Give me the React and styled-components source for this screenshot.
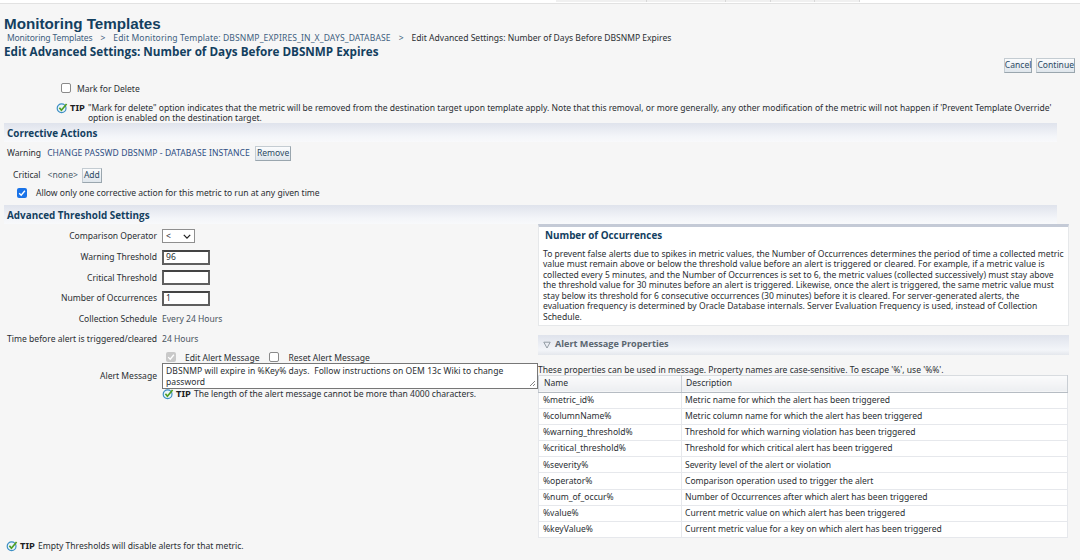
import React from "react";
import styled, { createGlobalStyle } from "styled-components";

const GlobalStyle = createGlobalStyle`
  html, body {
    margin: 0;
    padding: 0;
    background: #f6f6f6;
  }
  body {
    width: 1080px;
    height: 560px;
    overflow: hidden;
    font-family: "Noto Sans", "Liberation Sans", sans-serif;
    font-size: 8.55px;
    line-height: 10.5px;
    color: #2b2f33;
  }
`;

const tabs = [90, 78, 44, 43, 44];

const formRows = [
  { label: "Warning Threshold", value: "96" },
  { label: "Critical Threshold", value: "" },
  { label: "Number of Occurrences", value: "1" },
];

const properties = [
  ["%metric_id%", "Metric name for which the alert has been triggered"],
  ["%columnName%", "Metric column name for which the alert has been triggered"],
  ["%warning_threshold%", "Threshold for which warning violation has been triggered"],
  ["%critical_threshold%", "Threshold for which critical alert has been triggered"],
  ["%severity%", "Severity level of the alert or violation"],
  ["%operator%", "Comparison operation used to trigger the alert"],
  ["%num_of_occur%", "Number of Occurrences after which alert has been triggered"],
  ["%value%", "Current metric value on which alert has been triggered"],
  ["%keyValue%", "Current metric value for a key on which alert has been triggered"],
];

const TipIcon = () => (
  <TipSvg viewBox="0 0 12 12">
    <circle cx="5.6" cy="6.2" r="4.4" fill="#eaf5fb" stroke="#3d8fc4" strokeWidth="1.2" />
    <path d="M3.4 5.8 L5.4 8.2 L10.6 2" fill="none" stroke="#4f9e22" strokeWidth="1.7" />
  </TipSvg>
);

export default function App() {
  return (
    <>
      <GlobalStyle />
      <TopStrip>
        {tabs.map((w, i) => (
          <TopTab key={i} $w={w} />
        ))}
      </TopStrip>
      <Page>
        <Title>Monitoring Templates</Title>
        <Crumbs>
          <Crumb $tracking={-0.15}>Monitoring Templates</Crumb>
          <Sep>&gt;</Sep>
          <Crumb $tracking={0.13}>Edit Monitoring Template: DBSNMP_EXPIRES_IN_X_DAYS_DATABASE</Crumb>
          <Sep>&gt;</Sep>
          <span>Edit Advanced Settings: Number of Days Before DBSNMP Expires</span>
        </Crumbs>
        <SubTitle>Edit Advanced Settings: Number of Days Before DBSNMP Expires</SubTitle>
        <Actions>
          <Button>Cancel</Button>
          <Button>Continue</Button>
        </Actions>

        <DeleteRow>
          <Box />
          <span>Mark for Delete</span>
        </DeleteRow>
        <TopTip>
          <TipIcon />
          <TipLabel>TIP</TipLabel>
          <TipText>
            "Mark for delete" option indicates that the metric will be removed from the destination target upon
            template apply. Note that this removal, or more generally, any other modification of the metric will not
            happen if 'Prevent Template Override' option is enabled on the destination target.
          </TipText>
        </TopTip>

        <Band>Corrective Actions</Band>
        <WarningRow>
          <span>Warning</span>
          <ActionName>CHANGE PASSWD DBSNMP - DATABASE INSTANCE</ActionName>
          <Button>Remove</Button>
        </WarningRow>
        <CriticalRow>
          <span>Critical</span>
          <NoneText>&lt;none&gt;</NoneText>
          <Button>Add</Button>
        </CriticalRow>
        <AllowRow>
          <BlueCheck>
            <svg viewBox="0 0 10 10" width="8" height="8">
              <path d="M1.5 5.2 L4 7.8 L8.6 2.2" fill="none" stroke="#fff" strokeWidth="1.7" />
            </svg>
          </BlueCheck>
          <span>Allow only one corrective action for this metric to run at any given time</span>
        </AllowRow>

        <Band $flush>Advanced Threshold Settings</Band>
        <Columns>
          <LeftColumn>
            <FormRow $h={22}>
              <Label>Comparison Operator</Label>
              <SelectBox>
                <span>&lt;</span>
                <svg viewBox="0 0 10 6" width="8" height="5">
                  <path d="M1 1 L5 5 L9 1" fill="none" stroke="#222" strokeWidth="1.6" />
                </svg>
              </SelectBox>
            </FormRow>
            {formRows.map((r) => (
              <FormRow key={r.label} $h={20.5}>
                <Label>{r.label}</Label>
                <ValueInput>{r.value}</ValueInput>
              </FormRow>
            ))}
            <FormRow $h={21}>
              <Label>Collection Schedule</Label>
              <Value>Every 24 Hours</Value>
            </FormRow>
            <FormRow $h={20}>
              <Label>Time before alert is triggered/cleared</Label>
              <Value>24 Hours</Value>
            </FormRow>
            <EditRow>
              <GreyCheck>
                <svg viewBox="0 0 10 10" width="8" height="8">
                  <path d="M1.5 5.2 L4 7.8 L8.6 2.2" fill="none" stroke="#fff" strokeWidth="1.6" />
                </svg>
              </GreyCheck>
              <EditText>Edit Alert Message</EditText>
              <Box />
              <EditText>Reset Alert Message</EditText>
            </EditRow>
            <MessageRow>
              <MessageLabel>Alert Message</MessageLabel>
              <MessageBox>
                DBSNMP will expire in %Key% days.&nbsp; Follow instructions on OEM 13c Wiki to change password
                <Grip viewBox="0 0 7 7">
                  <path d="M1 6 L6 1 M4 6 L6 4" stroke="#666" strokeWidth="0.8" />
                </Grip>
              </MessageBox>
            </MessageRow>
            <MessageTip>
              <TipIcon />
              <TipLabel>TIP</TipLabel>
              <span>The length of the alert message cannot be more than 4000 characters.</span>
            </MessageTip>
          </LeftColumn>

          <RightColumn>
            <HelpCard>
              <HelpTitle>Number of Occurrences</HelpTitle>
              <HelpBody>
                To prevent false alerts due to spikes in metric values, the Number of Occurrences determines the period
                of time a collected metric value must remain above or below the threshold value before an alert is
                triggered or cleared. For example, if a metric value is collected every 5 minutes, and the Number of
                Occurrences is set to 6, the metric values (collected successively) must stay above the threshold value
                for 30 minutes before an alert is triggered. Likewise, once the alert is triggered, the same metric
                value must stay below its threshold for 6 consecutive occurrences (30 minutes) before it is cleared.
                For server-generated alerts, the
                <br />
                evaluation frequency is determined by Oracle Database internals. Server Evaluation Frequency is used,
                instead of Collection Schedule.
              </HelpBody>
            </HelpCard>
            <PropsBand>
              <svg viewBox="0 0 8 8" width="8" height="8">
                <path d="M0.8 1.2 H7.2 L4 7 Z" fill="none" stroke="#8a949c" strokeWidth="0.9" />
              </svg>
              <span>Alert Message Properties</span>
            </PropsBand>
            <PropsIntro>
              These properties can be used in message. Property names are case-sensitive. To escape '%', use '%%'.
            </PropsIntro>
            <PropsTable>
              <thead>
                <tr>
                  <HeadCell $first>Name</HeadCell>
                  <HeadCell>Description</HeadCell>
                </tr>
              </thead>
              <tbody>
                {properties.map(([name, desc]) => (
                  <tr key={name}>
                    <Cell $first>{name}</Cell>
                    <Cell>{desc}</Cell>
                  </tr>
                ))}
              </tbody>
            </PropsTable>
          </RightColumn>
        </Columns>

        <BottomTip>
          <TipIcon />
          <TipLabel>TIP</TipLabel>
          <span>Empty Thresholds will disable alerts for that metric.</span>
        </BottomTip>
      </Page>
    </>
  );
}

const TopStrip = styled.div`
  display: flex;
  height: 3px;
  padding-left: 556px;
  background: #fff;
  border-bottom: 1px solid #e2e2e2;
`;

const TopTab = styled.div`
  width: ${(p) => p.$w}px;
  height: 2px;
  background: #f0f0f0;
  border-right: 1px solid #d8d8d8;
`;

const Page = styled.div`
  padding: 0 4px;
`;

const Title = styled.h1`
  margin: 0;
  padding-top: 12px;
  font-family: "Liberation Sans", "Noto Sans", sans-serif;
  font-size: 15.2px;
  line-height: 16px;
  font-weight: 700;
  color: #13405f;
`;

const Crumbs = styled.div`
  display: flex;
  padding: 1px 0 0 3px;
  color: #2b2f33;
  white-space: nowrap;
`;

const Crumb = styled.span`
  letter-spacing: ${(p) => p.$tracking}px;
  color: #3f5f80;
`;

const Sep = styled.span`
  margin: 0 8px;
  color: #3f5f80;
`;

const SubTitle = styled.h2`
  margin: 0;
  font-family: "Open Sans", "Noto Sans", sans-serif;
  font-size: 11.7px;
  line-height: 14px;
  font-weight: 700;
  color: #13405f;
`;

const Actions = styled.div`
  display: flex;
  justify-content: flex-end;
  gap: 4px;
  height: 14px;
  padding-right: 1px;
`;

const Button = styled.button`
  height: 15px;
  padding: 0;
  border: 1px solid #c4ccd2;
  border-bottom-color: #9aa6ae;
  border-right-color: #9aa6ae;
  background: linear-gradient(#fbfcfd, #dfe6ec);
  color: #2c4a63;
  font: inherit;
`;

const DeleteRow = styled.div`
  display: flex;
  align-items: center;
  gap: 6px;
  height: 14px;
  margin-top: 11px;
  padding-left: 57px;
`;

const Box = styled.span`
  width: 8px;
  height: 8px;
  flex: none;
  margin-bottom: 3px;
  border: 1px solid #8a8a8a;
  border-radius: 2px;
  background: #fff;
`;

const TopTip = styled.div`
  display: flex;
  align-items: flex-start;
  height: 20px;
  margin-top: 6px;
  padding-left: 52px;
`;

const TipSvg = styled.svg`
  width: 12px;
  height: 12px;
  flex: none;
  margin-top: -1px;
`;

const TipLabel = styled.b`
  margin: 0 3px 0 2px;
  font-size: 9.4px;
  color: #1c2024;
`;

const TipText = styled.div`
  flex: 1;
  padding-right: 22px;
`;

const Band = styled.div`
  width: 1053px;
  height: 19px;
  margin-top: ${(p) => (p.$flush ? "6px" : "0")};
  padding: 5px 0 0 3px;
  box-sizing: border-box;
  background: linear-gradient(#dfe3ec, #f3f5f9 70%, #f8f9fb);
  font-family: "Open Sans", "Noto Sans", sans-serif;
  font-size: 9.9px;
  line-height: 11px;
  font-weight: 700;
  color: #13405f;
`;

const WarningRow = styled.div`
  display: flex;
  align-items: center;
  height: 15px;
  margin-top: 4px;
  padding-left: 3px;

  ${Button} {
    margin-left: 5px;
    padding: 0 1px;
  }
`;

const ActionName = styled.span`
  margin-left: 6px;
  letter-spacing: 0.08px;
  color: #2f4f84;
`;

const CriticalRow = styled.div`
  display: flex;
  align-items: center;
  height: 15px;
  margin-top: 7px;
  padding-left: 9px;

  ${Button} {
    margin-left: 4px;
    padding: 0 1px;
  }
`;

const NoneText = styled.span`
  margin-left: 7px;
  color: #4a5a68;
`;

const AllowRow = styled.div`
  display: flex;
  align-items: center;
  gap: 9px;
  height: 11px;
  margin-top: 5px;
  padding-left: 13px;
`;

const BlueCheck = styled.span`
  display: flex;
  align-items: center;
  justify-content: center;
  width: 10px;
  height: 10px;
  border-radius: 2px;
  background: #1a73e8;
`;

const Columns = styled.div`
  display: flex;
`;

const LeftColumn = styled.div`
  width: 534px;
  flex: none;
  padding-top: 1.5px;
  box-sizing: border-box;
`;

const FormRow = styled.div`
  display: flex;
  align-items: center;
  gap: 5px;
  height: ${(p) => p.$h}px;
`;

const Label = styled.span`
  width: 153px;
  flex: none;
  text-align: right;
  white-space: nowrap;
`;

const Value = styled.span`
  color: #4a5560;
`;

const SelectBox = styled.span`
  display: flex;
  align-items: center;
  justify-content: space-between;
  width: 25px;
  height: 12px;
  padding: 0 3px;
  border: 1px solid #8f8f8f;
  background: #fff;
`;

const ValueInput = styled.span`
  width: 42px;
  height: 11px;
  padding-left: 2px;
  border: 2px solid #5f5f5f;
  border-top-color: #444;
  background: #fff;
  line-height: 11px;
`;

const EditRow = styled.div`
  display: flex;
  align-items: center;
  height: 7px;
  margin-top: 5.5px;
  padding-left: 162px;
`;

const GreyCheck = styled.span`
  display: flex;
  align-items: center;
  justify-content: center;
  width: 10px;
  height: 10px;
  flex: none;
  margin-bottom: 3px;
  border-radius: 2px;
  background: #c9c9c9;
`;

const EditText = styled.span`
  margin: 0 10px 0 9px;
`;

const MessageRow = styled.div`
  display: flex;
  align-items: center;
  gap: 5px;
  margin-top: 1px;
`;

const MessageLabel = styled(Label)``;

const MessageBox = styled.div`
  position: relative;
  width: 357px;
  height: 22px;
  padding: 2px 14px 0 3px;
  border: 1px solid #777;
  background: #fff;
  letter-spacing: 0.05px;
`;

const Grip = styled.svg`
  position: absolute;
  right: 1px;
  bottom: 1px;
  width: 7px;
  height: 7px;
`;

const MessageTip = styled.div`
  display: flex;
  height: 12px;
  padding-left: 158px;
`;

const RightColumn = styled.div`
  width: 531px;
  flex: none;
`;

const HelpCard = styled.div`
  height: 102px;
  box-sizing: border-box;
  border: 1px solid #e6e8ea;
  border-top: 3px solid #c4cad6;
  background: #fff;
`;

const HelpTitle = styled.div`
  padding: 3px 0 0 6px;
  font-family: "Open Sans", "Noto Sans", sans-serif;
  font-size: 9.85px;
  line-height: 11px;
  font-weight: 700;
  color: #13405f;
`;

const HelpBody = styled.div`
  padding: 8px 3px 0 4px;
`;

const PropsBand = styled.div`
  display: flex;
  align-items: center;
  gap: 4px;
  height: 20px;
  box-sizing: border-box;
  margin-top: 9px;
  padding-left: 5px;
  background: linear-gradient(#dfe3ec, #f3f5f9 75%, #e4e7ec);
  font-family: "Open Sans", "Noto Sans", sans-serif;
  font-size: 9.1px;
  font-weight: 700;
  color: #5a6670;
`;

const PropsIntro = styled.div`
  height: 20px;
  padding-top: 10px;
  box-sizing: border-box;
  line-height: 10px;
`;

const PropsTable = styled.table`
  width: 530px;
  table-layout: fixed;
  border-collapse: collapse;
  background: #fff;
`;

const HeadCell = styled.th`
  width: ${(p) => (p.$first ? "137px" : "auto")};
  height: 16px;
  padding: 0 0 0 ${(p) => (p.$first ? "5px" : "4px")};
  border: 1px solid #c9ced4;
  border-top-color: #d8dce0;
  border-bottom: 1px solid #b6bcc3;
  background: linear-gradient(#fbfbfc, #eceef1);
  text-align: left;
  font-weight: 400;
`;

const Cell = styled.td`
  height: 15.2px;
  padding: 0 0 0 ${(p) => (p.$first ? "4px" : "3px")};
  border: 1px solid #e6e8ec;
  white-space: nowrap;
`;

const BottomTip = styled.div`
  display: flex;
  margin-top: 3px;
  padding-left: 2px;
`;
